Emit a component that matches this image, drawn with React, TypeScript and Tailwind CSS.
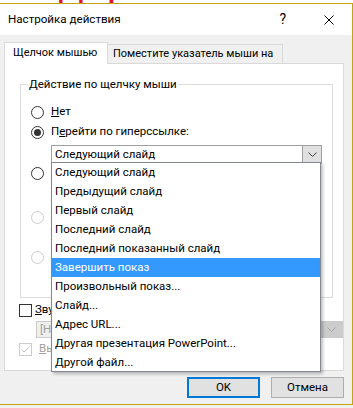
import React from 'react';

const listItems = [
  'Следующий слайд',
  'Предыдущий слайд',
  'Первый слайд',
  'Последний слайд',
  'Последний показанный слайд',
  'Завершить показ',
  'Произвольный показ...',
  'Слайд...',
  'Адрес URL...',
  'Другая презентация PowerPoint...',
  'Другой файл...',
];

const Radio = ({ checked, disabled }: { checked?: boolean; disabled?: boolean }) => (
  <span
    className={`w-[13px] h-[13px] rounded-full border flex items-center justify-center bg-white ${
      disabled ? 'border-[#cccccc]' : 'border-[#333333]'
    }`}
  >
    {checked && <span className="w-[7px] h-[7px] rounded-full bg-[#333333]" />}
  </span>
);

const Chevron = ({ color = '#404040' }: { color?: string }) => (
  <svg width="9" height="5" viewBox="0 0 9 5">
    <path d="M0.5 0.5 L4.5 4.5 L8.5 0.5" fill="none" stroke={color} strokeWidth="1" />
  </svg>
);

const App = () => {
  return (
    <div className="w-[353px] h-[408px] overflow-hidden bg-[#f0f0f0] relative font-['Roboto',sans-serif] text-[11.5px] text-black whitespace-nowrap">
      {/* slide title peeking behind the dialog */}
      <div className="h-[3px] overflow-hidden bg-white">
        <div className="-mt-[36px] ml-[6px] text-[42px] leading-[42px] text-[#e81123] font-['Liberation_Sans',sans-serif]">
          Содержание
        </div>
      </div>

      <div className="h-[402px] border-y border-r border-[#c1a70f] flex flex-col">
        {/* title bar */}
        <div className="h-[31px] bg-white flex items-center">
          <span className="pl-[8px] text-[11.6px]">Настройка действия</span>
          <span className="ml-auto mr-[38px] text-[14px]">?</span>
          <svg width="10" height="10" viewBox="0 0 10 10" className="mr-[18px]">
            <path d="M0.5 0.5 L9.5 9.5 M9.5 0.5 L0.5 9.5" stroke="#000" strokeWidth="1" />
          </svg>
        </div>

        {/* body */}
        <div className="flex-1 bg-[#f0f0f0] pt-[7px] pl-[4px] pr-[8px] flex flex-col">
          {/* tabs */}
          <div className="h-[21px] flex items-end text-[11px]">
            <div className="relative z-10 h-[22px] -mb-px w-[104px] bg-white border-x border-t border-[#d9d9d9] pl-[8px] flex items-center">
              Щелчок мышью
            </div>
            <div className="h-[19px] w-[176px] -ml-px bg-[#f0f0f0] border-x border-t border-[#d9d9d9] pl-[5px] flex items-center">
              Поместите указатель мыши на
            </div>
          </div>

          {/* panel */}
          <div className="h-[308px] w-[340px] bg-white border border-[#d9d9d9] flex flex-col">
            <div className="mt-[20px] ml-[15px] w-[313px] h-[214px] border border-[#dcdcdc] flex flex-col">
              <div className="-mt-[9px] ml-[7px] w-fit bg-white px-[1px] leading-[16px] h-[16px]">
                Действие по щелчку мыши
              </div>
              <div className="mt-[10px] h-[20px] flex items-center pl-[10px] gap-[7px]">
                <Radio />
                <span>
                  <span className="underline">Н</span>ет
                </span>
              </div>
              <div className="h-[20px] flex items-center pl-[10px] gap-[7px]">
                <Radio checked />
                <span>
                  П<span className="underline">е</span>рейти по гиперссылке:
                </span>
              </div>
              <div className="mt-[3px] ml-[30px] w-[271px] h-[19px] border border-[#a0a0a0] bg-white flex">
                <span className="flex-1 pl-[3px] leading-[17px]">Следующий слайд</span>
                <span className="w-[19px] bg-[#e0e0e0] border-l border-[#a0a0a0] flex items-center justify-center">
                  <Chevron />
                </span>
              </div>
              <div className="-mt-px h-[20px] flex items-center pl-[10px] gap-[7px]">
                <Radio />
                <span>Запуск программы:</span>
              </div>
              <div className="mt-[24px] h-[20px] flex items-center pl-[10px] gap-[7px] text-[#a0a0a0]">
                <Radio disabled />
                <span>Запуск макроса:</span>
              </div>
              <div className="mt-[20px] h-[20px] flex items-center pl-[10px] gap-[7px] text-[#a0a0a0]">
                <Radio disabled />
                <span>Действие:</span>
              </div>
            </div>

            <div className="mt-[2px] h-[20px] flex items-center pl-[14px] gap-[3px]">
              <span className="w-[13px] h-[13px] border border-[#333333] bg-white" />
              <span>
                <span className="underline">З</span>вук:
              </span>
            </div>
            <div className="mt-[1px] ml-[31px] w-[307px] h-[17px] border border-[#cccccc] bg-[#f0f0f0] flex text-[#a0a0a0]">
              <span className="flex-1 pl-[3px] leading-[15px]">[Нет звука]</span>
              <span className="w-[21px] bg-[#cccccc] flex items-center justify-center">
                <Chevron color="#a8a8a8" />
              </span>
            </div>
            <div className="mt-[1px] h-[20px] flex items-center pl-[14px] gap-[7px] text-[#a0a0a0]">
              <span className="w-[13px] h-[13px] border border-[#cccccc] bg-white flex items-center justify-center">
                <svg width="9" height="7" viewBox="0 0 9 7">
                  <path d="M0.5 3.5 L3 6 L8.5 0.5" fill="none" stroke="#c0c0c0" strokeWidth="1" />
                </svg>
              </span>
              <span>
                <span className="underline">В</span>ыделить
              </span>
            </div>
          </div>

          {/* buttons */}
          <div className="mt-[6px] flex justify-end gap-[11px]">
            <button className="w-[73px] h-[21px] bg-[#e1e1e1] border-2 border-[#0078d7] leading-[17px]">OK</button>
            <button className="w-[73px] h-[21px] bg-[#e1e1e1] border border-[#adadad] leading-[19px]">Отмена</button>
          </div>
        </div>
      </div>

      {/* open dropdown list */}
      <div className="absolute left-[51px] top-[162px] w-[270px] h-[210px] bg-white border border-[#828790] shadow-[2px_2px_3px_rgba(0,0,0,0.25)]">
        {listItems.map((item, i) => (
          <div
            key={item}
            className={`h-[19px] pl-[3px] leading-[19px] ${i === 5 ? 'bg-[#3399ff] text-white' : ''}`}
          >
            {item}
          </div>
        ))}
      </div>
    </div>
  );
};

export default App;
